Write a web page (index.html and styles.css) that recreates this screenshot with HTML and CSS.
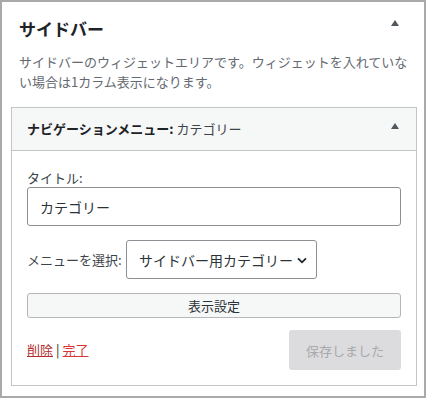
FILE: index.html
```html
<!DOCTYPE html>
<html lang="ja">
<head>
<meta charset="utf-8">
<link rel="stylesheet" href="styles.css">
</head>
<body>
<div class="frame">
  <div class="area-head">
    <h2 class="area-title">サイドバー</h2>
    <span class="arrow arrow-area"></span>
  </div>
  <p class="desc">サイドバーのウィジェットエリアです。ウィジェットを入れていない場合は1カラム表示になります。</p>
  <div class="widget">
    <div class="widget-top">
      <h3 class="widget-title"><span class="wt-main">ナビゲーションメニュー:</span> <span class="wt-in">カテゴリー</span></h3>
      <span class="arrow arrow-widget"></span>
    </div>
    <div class="widget-body">
      <label class="lbl">タイトル:</label>
      <div class="input">カテゴリー</div>
      <div class="select-row">
        <span class="lbl-inline">メニューを選択:</span>
        <div class="select">
          <span class="select-text">サイドバー用カテゴリー</span>
          <svg class="chev" width="10" height="7" viewBox="0 0 10 7"><path d="M1 1.3 L5 5.3 L9 1.3" fill="none" stroke="#1d2327" stroke-width="1.8"/></svg>
        </div>
      </div>
      <div class="btn">表示設定</div>
      <div class="actions">
        <div class="links"><a class="del">削除</a><span class="sep">|</span><a class="done">完了</a></div>
        <div class="save">保存しました</div>
      </div>
    </div>
  </div>
</div>
</body>
</html>
```
FILE: styles.css
```css
html, body {
  margin: 0;
  padding: 0;
  background: #fff;
}
body {
  font-family: "Noto Sans CJK JP", "Noto Sans", sans-serif;
  color: #1d2327;
}
.frame {
  box-sizing: border-box;
  width: 426px;
  height: 398px;
  border: 2px solid #a9a9a9;
  padding-top: 15px;
  background: #fff;
}
.area-head {
  display: flex;
  justify-content: space-between;
  align-items: flex-start;
  padding: 0 25px 0 17px;
}
.area-title {
  margin: 0;
  font-size: 17px;
  line-height: 24px;
  font-weight: 700;
  color: #1d2327;
}
.arrow {
  width: 0;
  height: 0;
  border-left: 4px solid transparent;
  border-right: 4px solid transparent;
  border-bottom: 6px solid #50575e;
}
.arrow-area {
  margin-top: 3px;
}
.desc {
  margin: 11px 0 0;
  padding: 0 12px 0 17px;
  font-size: 13px;
  line-height: 19.5px;
  color: #646970;
}
.widget {
  box-sizing: border-box;
  width: 406px;
  margin: 16px 0 0 9px;
  border: 1px solid #c3c4c7;
  background: #fff;
}
.widget-top {
  display: flex;
  justify-content: space-between;
  align-items: center;
  height: 42px;
  padding: 0 17px 0 15px;
  background: #f6f7f7;
  border-bottom: 1px solid #c3c4c7;
}
.widget-title {
  margin: 0;
  font-size: 13px;
  line-height: 20px;
  font-weight: 400;
}
.wt-main {
  font-weight: 700;
  color: #1d2327;
}
.wt-in {
  color: #3c434a;
}
.arrow-widget {
  align-self: flex-start;
  margin-top: 15px;
}
.widget-body {
  padding: 17px 15px 15px;
}
.lbl {
  display: block;
  font-size: 13px;
  line-height: 19px;
  color: #3c434a;
}
.input {
  box-sizing: border-box;
  height: 39px;
  display: flex;
  align-items: center;
  padding: 0 12px;
  border: 1px solid #8c8f94;
  border-radius: 3px;
  font-size: 14px;
  color: #2c3338;
}
.select-row {
  display: flex;
  align-items: center;
  gap: 3px;
  margin-top: 14px;
}
.lbl-inline {
  font-size: 13px;
  color: #3c434a;
  width: 96px;
}
.select {
  box-sizing: border-box;
  width: 191px;
  height: 39px;
  display: flex;
  align-items: center;
  gap: 4px;
  padding: 0 11px 0 12px;
  border: 1px solid #8c8f94;
  border-radius: 3px;
  font-size: 14px;
  color: #2c3338;
  white-space: nowrap;
}
.chev {
  flex: none;
  margin-top: 1px;
}
.btn {
  box-sizing: border-box;
  height: 25px;
  margin-top: 14px;
  display: flex;
  align-items: center;
  justify-content: center;
  border: 1px solid #b4b6b9;
  border-radius: 3px;
  background: #f6f7f7;
  font-size: 13px;
  color: #2c3338;
}
.actions {
  display: flex;
  justify-content: space-between;
  align-items: center;
  margin-top: 12px;
}
.links {
  font-size: 13px;
  line-height: 20px;
}
.del {
  color: #b32d2e;
  text-decoration: underline;
}
.done {
  color: #d63638;
  text-decoration: underline;
}
.sep {
  color: #1d2327;
  margin: 0 3px;
}
.save {
  box-sizing: border-box;
  width: 112px;
  height: 40px;
  display: flex;
  align-items: center;
  justify-content: center;
  background: #dcdcde;
  border-radius: 3px;
  font-size: 13px;
  color: #a7aaad;
}
```
